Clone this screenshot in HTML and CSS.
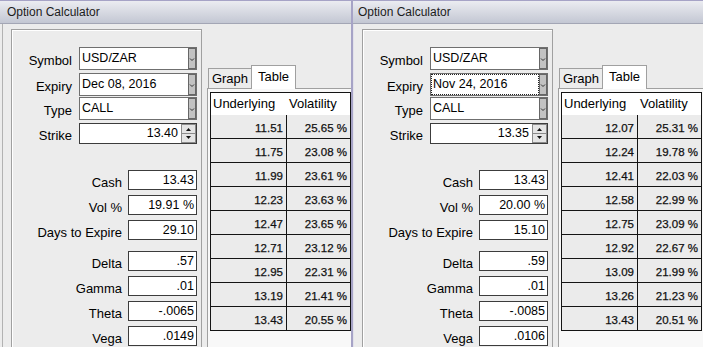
FILE: index.html
```html
<!DOCTYPE html>
<html>
<head>
<meta charset="utf-8">
<title>Option Calculator</title>
<link rel="stylesheet" href="styles.css">
</head>
<body>
<div class="win win-a">
  <div class="title">Option Calculator</div>
  <div class="body">
    <div class="form">
      <div class="sel-grid">
        <div class="lbl">Symbol</div>
        <div class="combo"><div class="txt">USD/ZAR</div><svg class="btn" width="8" height="21" viewBox="0 0 8 21"><rect x="0.5" y="0.5" width="7" height="20" fill="#c2c2c2" stroke="#666"/><path d="M2 10.5 L4 12.5 L6 10.5" fill="none" stroke="#333"/></svg></div>
        <div class="lbl">Expiry</div>
        <div class="combo"><div class="txt">Dec 08, 2016</div><svg class="btn" width="8" height="21" viewBox="0 0 8 21"><rect x="0.5" y="0.5" width="7" height="20" fill="#c2c2c2" stroke="#666"/><path d="M2 10.5 L4 12.5 L6 10.5" fill="none" stroke="#333"/></svg></div>
        <div class="lbl">Type</div>
        <div class="combo"><div class="txt">CALL</div><svg class="btn" width="8" height="21" viewBox="0 0 8 21"><rect x="0.5" y="0.5" width="7" height="20" fill="#c2c2c2" stroke="#666"/><path d="M2 10.5 L4 12.5 L6 10.5" fill="none" stroke="#333"/></svg></div>
        <div class="lbl lbl-s">Strike</div>
        <div class="spin"><div class="txt">13.40</div><svg class="arr" width="15" height="19" viewBox="0 0 15 19"><rect x="0.5" y="0.5" width="14" height="18" fill="#e4e4e4" stroke="#8a8a8a"/><line x1="1" y1="9.5" x2="14" y2="9.5" stroke="#8a8a8a"/><path d="M5 7 L7.5 4 L10 7 Z" fill="#111"/><path d="M5 12 L10 12 L7.5 15 Z" fill="#111"/></svg></div>
      </div>
      <div class="val-grid">
        <div class="vl">Cash</div><div class="inp">13.43</div>
        <div class="vl">Vol %</div><div class="inp">19.91 %</div>
        <div class="vl">Days to Expire</div><div class="inp">29.10</div>
        <div class="vl sep">Delta</div><div class="inp sep">.57</div>
        <div class="vl">Gamma</div><div class="inp">.01</div>
        <div class="vl">Theta</div><div class="inp">-.0065</div>
        <div class="vl">Vega</div><div class="inp">.0149</div>
      </div>
    </div>
    <div class="tabs">
      <div class="tabstrip">
        <div class="tab tab-g">Graph</div>
        <div class="tab tab-t">Table</div>
      </div>
      <div class="panel">
        <div class="tbl">
          <div class="tr"><div class="th">Underlying</div><div class="th">Volatility</div></div>
          <div class="tr"><div class="td c1">11.51</div><div class="td">25.65 %</div></div>
          <div class="tr"><div class="td c1">11.75</div><div class="td">23.08 %</div></div>
          <div class="tr"><div class="td c1">11.99</div><div class="td">23.61 %</div></div>
          <div class="tr"><div class="td c1">12.23</div><div class="td">23.63 %</div></div>
          <div class="tr"><div class="td c1">12.47</div><div class="td">23.65 %</div></div>
          <div class="tr"><div class="td c1">12.71</div><div class="td">23.12 %</div></div>
          <div class="tr"><div class="td c1">12.95</div><div class="td">22.31 %</div></div>
          <div class="tr"><div class="td c1">13.19</div><div class="td">21.41 %</div></div>
          <div class="tr"><div class="td c1">13.43</div><div class="td">20.55 %</div></div>
        </div>
      </div>
    </div>
  </div>
</div>
<div class="win win-b">
  <div class="title">Option Calculator</div>
  <div class="body">
    <div class="form">
      <div class="sel-grid">
        <div class="lbl">Symbol</div>
        <div class="combo"><div class="txt">USD/ZAR</div><svg class="btn" width="8" height="21" viewBox="0 0 8 21"><rect x="0.5" y="0.5" width="7" height="20" fill="#c2c2c2" stroke="#666"/><path d="M2 10.5 L4 12.5 L6 10.5" fill="none" stroke="#333"/></svg></div>
        <div class="lbl">Expiry</div>
        <div class="combo"><div class="txt focus">Nov 24, 2016</div><svg class="btn" width="8" height="21" viewBox="0 0 8 21"><rect x="0.5" y="0.5" width="7" height="20" fill="#c2c2c2" stroke="#666"/><path d="M2 10.5 L4 12.5 L6 10.5" fill="none" stroke="#333"/></svg></div>
        <div class="lbl">Type</div>
        <div class="combo"><div class="txt">CALL</div><svg class="btn" width="8" height="21" viewBox="0 0 8 21"><rect x="0.5" y="0.5" width="7" height="20" fill="#c2c2c2" stroke="#666"/><path d="M2 10.5 L4 12.5 L6 10.5" fill="none" stroke="#333"/></svg></div>
        <div class="lbl lbl-s">Strike</div>
        <div class="spin"><div class="txt">13.35</div><svg class="arr" width="15" height="19" viewBox="0 0 15 19"><rect x="0.5" y="0.5" width="14" height="18" fill="#e4e4e4" stroke="#8a8a8a"/><line x1="1" y1="9.5" x2="14" y2="9.5" stroke="#8a8a8a"/><path d="M5 7 L7.5 4 L10 7 Z" fill="#111"/><path d="M5 12 L10 12 L7.5 15 Z" fill="#111"/></svg></div>
      </div>
      <div class="val-grid">
        <div class="vl">Cash</div><div class="inp">13.43</div>
        <div class="vl">Vol %</div><div class="inp">20.00 %</div>
        <div class="vl">Days to Expire</div><div class="inp">15.10</div>
        <div class="vl sep">Delta</div><div class="inp sep">.59</div>
        <div class="vl">Gamma</div><div class="inp">.01</div>
        <div class="vl">Theta</div><div class="inp">-.0085</div>
        <div class="vl">Vega</div><div class="inp">.0106</div>
      </div>
    </div>
    <div class="tabs">
      <div class="tabstrip">
        <div class="tab tab-g">Graph</div>
        <div class="tab tab-t">Table</div>
      </div>
      <div class="panel">
        <div class="tbl">
          <div class="tr"><div class="th">Underlying</div><div class="th">Volatility</div></div>
          <div class="tr"><div class="td c1">12.07</div><div class="td">25.31 %</div></div>
          <div class="tr"><div class="td c1">12.24</div><div class="td">19.78 %</div></div>
          <div class="tr"><div class="td c1">12.41</div><div class="td">22.03 %</div></div>
          <div class="tr"><div class="td c1">12.58</div><div class="td">22.99 %</div></div>
          <div class="tr"><div class="td c1">12.75</div><div class="td">23.09 %</div></div>
          <div class="tr"><div class="td c1">12.92</div><div class="td">22.67 %</div></div>
          <div class="tr"><div class="td c1">13.09</div><div class="td">21.99 %</div></div>
          <div class="tr"><div class="td c1">13.26</div><div class="td">21.23 %</div></div>
          <div class="tr"><div class="td c1">13.43</div><div class="td">20.51 %</div></div>
        </div>
      </div>
    </div>
  </div>
</div>
</body>
</html>
```
FILE: styles.css
```css
html, body {
  margin: 0;
  padding: 0;
}
body {
  width: 703px;
  height: 347px;
  overflow: hidden;
  display: flex;
  background: #ececec;
  font-family: "Liberation Sans", Arial, sans-serif;
  color: #000;
}
.win {
  height: 347px;
  box-sizing: border-box;
  overflow: hidden;
  background: #ececec;
  border-top: 1px solid #a6a3c6;
  display: flex;
  flex-direction: column;
  flex: none;
}
.win-a {
  width: 351px;
}
.win-b {
  width: 352px;
  border-left: 2px solid #a6a3c6;
}
.title {
  flex: none;
  height: 22px;
  border-bottom: 1px solid #a3a6b5;
  background: linear-gradient(#ebecf1, #c3c7d3);
  font-size: 12px;
  line-height: 23px;
  padding-left: 7px;
  color: #1c1c1c;
}
.win-b .title {
  padding-left: 5px;
}
.body {
  flex: 1;
  min-height: 0;
  display: flex;
  align-items: flex-start;
  overflow: hidden;
  border-left: 1px solid #b2b2b2;
}
.win-a .body {
  margin-left: 2px;
}
.win-b .body {
  border-left-color: #e2e1ea;
}
.form {
  flex: none;
  margin: 5px 0 0 8px;
  width: 191px;
  height: 340px;
  box-sizing: border-box;
  border: 1px solid #a0a0a0;
  box-shadow: inset 1px 1px 0 #fff;
  padding-top: 17px;
}
.sel-grid {
  display: grid;
  grid-template-columns: 60px 118px;
  grid-template-rows: 26px 24px 26px 21px;
  column-gap: 7px;
  align-items: start;
}
.lbl {
  font-size: 13px;
  text-align: right;
  white-space: nowrap;
  height: 23px;
  line-height: 27px;
}
.lbl-s {
  height: 21px;
  line-height: 25px;
}
.combo {
  height: 23px;
  box-sizing: border-box;
  border: 1px solid #6f6f6f;
  background: #fff;
  display: flex;
}
.txt {
  flex: 1;
  min-width: 0;
  font-size: 12.5px;
  line-height: 21px;
  padding-left: 2px;
  white-space: nowrap;
}
.txt.focus {
  outline: 1px dotted #222;
  outline-offset: -1px;
}
.btn {
  flex: none;
  display: block;
}
.spin {
  height: 21px;
  box-sizing: border-box;
  border: 1px solid #3c3c3c;
  background: #fff;
  display: flex;
}
.spin .txt {
  text-align: right;
  padding-right: 3px;
  line-height: 19px;
}
.arr {
  flex: none;
  display: block;
}
.val-grid {
  margin-top: 26px;
  display: grid;
  grid-template-columns: 110px 69px;
  column-gap: 6px;
  row-gap: 5px;
}
.vl {
  font-size: 13px;
  text-align: right;
  white-space: nowrap;
  height: 20px;
  line-height: 26px;
}
.inp {
  height: 20px;
  box-sizing: border-box;
  border: 1px solid #3c3c3c;
  background: #fff;
  font-size: 12.5px;
  line-height: 18px;
  text-align: right;
  padding-right: 2px;
  white-space: nowrap;
}
.sep {
  margin-top: 6px;
}
.tabs {
  flex: 1;
  min-width: 0;
  margin: 41px 0 0 5px;
}
.tabstrip {
  height: 23px;
  display: flex;
  align-items: flex-start;
  padding-left: 1px;
}
.tab {
  box-sizing: border-box;
  font-size: 13px;
  text-align: center;
  border: 1px solid #a0a0a0;
  border-bottom: none;
  white-space: nowrap;
}
.tab-g {
  width: 43px;
  height: 20px;
  margin-top: 3px;
  line-height: 19px;
  border-right: none;
  background: #ececec;
}
.tab-t {
  width: 45px;
  height: 24px;
  padding-top: 1px;
  line-height: 19px;
  background: #fff;
  position: relative;
  z-index: 1;
}
.panel {
  height: 280px;
  border-left: 1px solid #a0a0a0;
  border-top: 1px solid #a0a0a0;
  background: #f8f8f8;
  padding: 3px 0 0 2px;
}
.tbl {
  width: 141px;
  box-sizing: border-box;
  border: 1px solid #141414;
  border-bottom: none;
}
.tr {
  display: grid;
  grid-template-columns: 76px 63px;
}
.th {
  height: 22px;
  background: #fff;
  font-size: 13px;
  line-height: 22px;
  padding-left: 2px;
  white-space: nowrap;
}
.td {
  height: 24px;
  box-sizing: border-box;
  border-bottom: 1px solid #141414;
  background: #ebebeb;
  font-size: 11.5px;
  line-height: 20px;
  padding-top: 3px;
  padding-right: 3px;
  text-align: right;
  white-space: nowrap;
  color: #111;
  -webkit-text-stroke: 0.25px #111;
}
.td.c1 {
  border-right: 1px solid #141414;
}
```
